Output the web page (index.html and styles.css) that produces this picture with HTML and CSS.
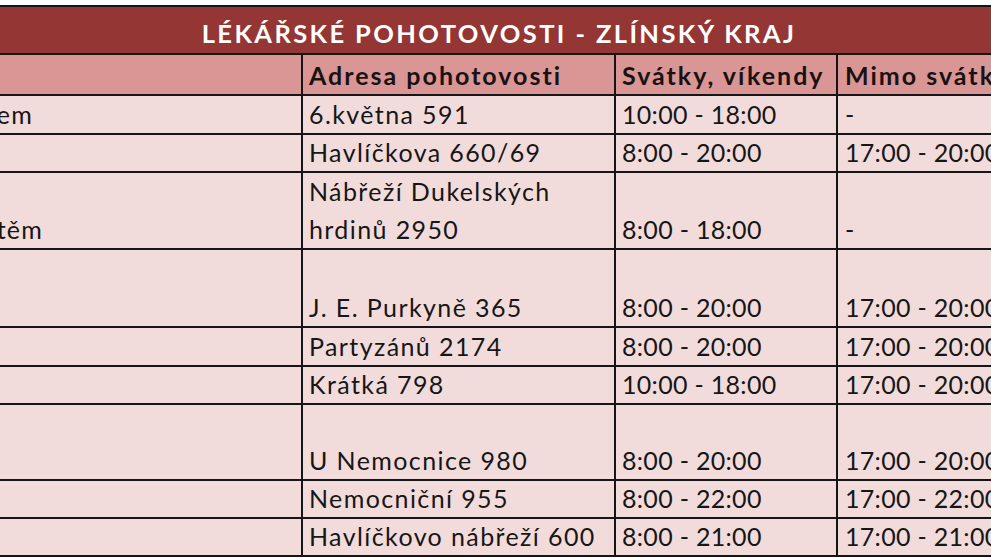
FILE: index.html
```html
<!DOCTYPE html>
<html lang="cs">
<head>
<meta charset="utf-8">
<title>Lékařské pohotovosti - Zlínský kraj</title>
<link rel="stylesheet" href="styles.css">
</head>
<body>
<div class="sheet">
  <div class="cell title">LÉKÁŘSKÉ POHOTOVOSTI - ZLÍNSKÝ KRAJ</div>

  <div class="cell head"></div>
  <div class="cell head">Adresa pohotovosti</div>
  <div class="cell head">Svátky, víkendy</div>
  <div class="cell head">Mimo svátky a víkendy</div>

  <div class="cell first"><span class="tail tail-a"><span>Kroměříž - s dětským lékařem</span></span></div>
  <div class="cell addr">6.května 591</div>
  <div class="cell time">10:00 - 18:00</div>
  <div class="cell time">-</div>

  <div class="cell first"></div>
  <div class="cell addr">Havlíčkova 660/69</div>
  <div class="cell time">8:00 - 20:00</div>
  <div class="cell time">17:00 - 20:00</div>

  <div class="cell first"><span class="tail tail-b"><span>Uherské Hradiště - s dítětěm</span></span></div>
  <div class="cell addr">Nábřeží Dukelských<br>hrdinů 2950</div>
  <div class="cell time">8:00 - 18:00</div>
  <div class="cell time">-</div>

  <div class="cell first"></div>
  <div class="cell addr">J. E. Purkyně 365</div>
  <div class="cell time">8:00 - 20:00</div>
  <div class="cell time">17:00 - 20:00</div>

  <div class="cell first"></div>
  <div class="cell addr">Partyzánů 2174</div>
  <div class="cell time">8:00 - 20:00</div>
  <div class="cell time">17:00 - 20:00</div>

  <div class="cell first"></div>
  <div class="cell addr">Krátká 798</div>
  <div class="cell time">10:00 - 18:00</div>
  <div class="cell time">17:00 - 20:00</div>

  <div class="cell first"></div>
  <div class="cell addr">U Nemocnice 980</div>
  <div class="cell time">8:00 - 20:00</div>
  <div class="cell time">17:00 - 20:00</div>

  <div class="cell first"></div>
  <div class="cell addr">Nemocniční 955</div>
  <div class="cell time">8:00 - 22:00</div>
  <div class="cell time">17:00 - 22:00</div>

  <div class="cell first"></div>
  <div class="cell addr">Havlíčkovo nábřeží 600</div>
  <div class="cell time">8:00 - 21:00</div>
  <div class="cell time">17:00 - 21:00</div>
</div>
</body>
</html>
```

FILE: styles.css
```css
html, body {
  margin: 0;
  padding: 0;
  background: #ffffff;
  overflow: hidden;
}

body {
  width: 991px;
  height: 558px;
  padding-top: 5px;
  box-sizing: border-box;
  font-family: Lato, "Open Sans", sans-serif;
  font-size: 25px;
  color: #161616;
}

.sheet {
  display: grid;
  grid-template-columns: 301px 311px 220px 1fr;
  grid-template-rows: 46px 39px 37px 36px 75px 76px 37px 36px 74px 36px 36px;
  gap: 2px;
  background: #151515;
  border-top: 2px solid #151515;
  border-bottom: 2px solid #151515;
  width: 991px;
}

.cell {
  background: #f2dcdb;
  display: flex;
  flex-direction: column;
  justify-content: flex-end;
  padding: 0 0 0 6px;
  line-height: 38px;
  white-space: nowrap;
  min-width: 0;
}

.cell:nth-child(4n+1) {
  padding-left: 7px;
}

.addr {
  letter-spacing: 1.4px;
}

.time {
  letter-spacing: 0.3px;
}

.title {
  grid-column: 1 / -1;
  background: #943634;
  color: #ffffff;
  font-weight: 700;
  font-size: 25.5px;
  letter-spacing: 2.4px;
  align-items: center;
  padding: 0 0 1px 0;
  line-height: 38px;
}

.head {
  background: #d99694;
  font-weight: 700;
  color: #1a1212;
  letter-spacing: 2px;
}

.cell.first {
  padding-left: 0;
  letter-spacing: 1.2px;
}

.tail {
  display: flex;
  justify-content: flex-end;
}

.tail-a {
  width: 33px;
}

.tail-b {
  width: 43px;
}
```
